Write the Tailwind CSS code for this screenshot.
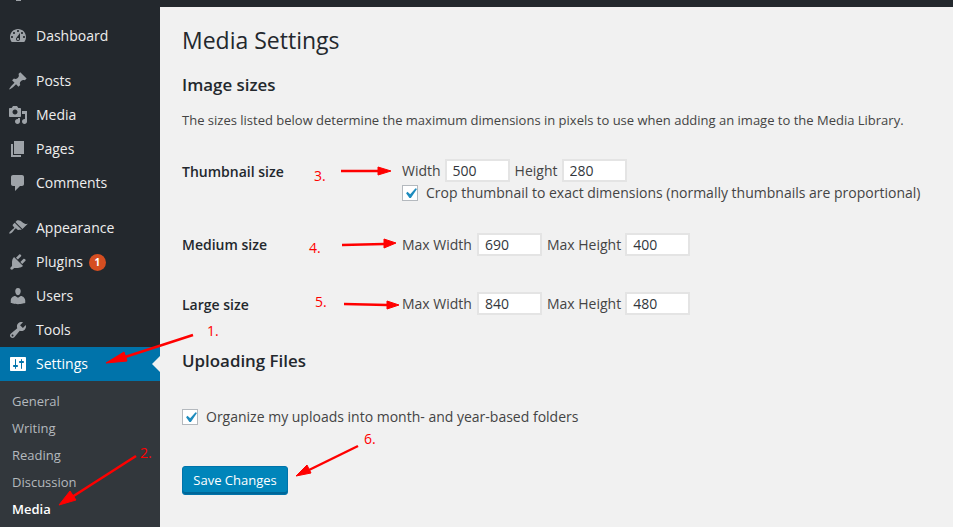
<!DOCTYPE html>
<html lang="en">
<head>
    <meta charset="UTF-8">
    <title>Media Settings</title>
    <script src="https://cdn.jsdelivr.net/npm/@tailwindcss/browser@4"></script>
</head>
<body class="relative h-[527px] w-[953px] overflow-hidden bg-[#f1f1f1] font-['Open_Sans',sans-serif] text-[#444]">
    <!-- Admin bar, cut off by the screenshot -->
    <div class="h-[7px] bg-[#23282d]">
        <div class="ml-4 h-px w-[5px] bg-[#9ea3a8]"></div>
    </div>

    <div class="flex h-[520px]">
        <!-- Sidebar -->
        <aside class="w-40 shrink-0 bg-[#23282d] text-sm text-[#eee]">
            <a class="mt-[12px] flex h-[34px] items-center gap-2 pl-2">
                <svg class="h-5 w-5 fill-[#9ea3a8]" viewBox="0 0 20 20"><path d="M3.76 16h12.48c1.1-1.37 1.76-3.11 1.76-5 0-4.42-3.58-8-8-8s-8 3.58-8 8c0 1.89.66 3.63 1.76 5zM10 4c.55 0 1 .45 1 1s-.45 1-1 1-1-.45-1-1 .45-1 1-1zM6 6c.55 0 1 .45 1 1s-.45 1-1 1-1-.45-1-1 .45-1 1-1zm8 0c.55 0 1 .45 1 1s-.45 1-1 1-1-.45-1-1 .45-1 1-1zm-5.37 5.55L12 7v6c0 1.1-.9 2-2 2s-2-.9-2-2c0-.57.24-1.08.63-1.45zM4 10c.55 0 1 .45 1 1s-.45 1-1 1-1-.45-1-1 .45-1 1-1zm12 0c.55 0 1 .45 1 1s-.45 1-1 1-1-.45-1-1 .45-1 1-1zm-5 3c0-.55-.45-1-1-1s-1 .45-1 1 .45 1 1 1 1-.45 1-1z"/></svg>
                Dashboard
            </a>
            <a class="mt-[11px] flex h-[34px] items-center gap-2 pl-2">
                <svg class="h-5 w-5 fill-[#9ea3a8]" viewBox="0 0 20 20"><path d="M10.44 3.02l1.82-1.82 6.36 6.35-1.83 1.82c-1.05-.68-2.48-.57-3.41.36l-.75.75c-.92.93-1.04 2.35-.35 3.41l-1.83 1.82-2.41-2.41-2.8 2.79c-.42.42-3.38 2.71-3.8 2.29s1.86-3.39 2.28-3.81l2.79-2.79L4.1 9.36l1.83-1.82c1.05.69 2.48.57 3.4-.36l.75-.75c.93-.92 1.05-2.35.36-3.41z"/></svg>
                Posts
            </a>
            <a class="flex h-[34px] items-center gap-2 pl-2">
                <svg class="h-5 w-5 fill-[#9ea3a8]" viewBox="0 0 20 20"><path d="M13 11V4c0-.55-.45-1-1-1h-1.67L9 1H5L3.67 3H2c-.55 0-1 .45-1 1v7c0 .55.45 1 1 1h10c.55 0 1-.45 1-1zM7 4.5c1.38 0 2.5 1.12 2.5 2.5S8.38 9.5 7 9.5 4.5 8.38 4.5 7 5.62 4.5 7 4.5zM14 6h5v10.5c0 1.38-1.12 2.5-2.5 2.5S14 17.88 14 16.5s1.12-2.5 2.5-2.5c.17 0 .34.02.5.05V9h-3V6zm-4 8.05V13h2v3.5c0 1.38-1.12 2.5-2.5 2.5S7 17.88 7 16.5 8.12 14 9.5 14c.17 0 .34.02.5.05z"/></svg>
                Media
            </a>
            <a class="flex h-[34px] items-center gap-2 pl-2">
                <svg class="h-5 w-5 fill-[#9ea3a8]" viewBox="0 0 20 20"><path d="M6 15V2h10v13H6zm-1 1h8v2H3V5h2v11z"/></svg>
                Pages
            </a>
            <a class="flex h-[34px] items-center gap-2 pl-2">
                <svg class="h-5 w-5 fill-[#9ea3a8]" viewBox="0 0 20 20"><path d="M5 2h9c1.1 0 2 .9 2 2v7c0 1.1-.9 2-2 2h-2l-5 5v-5H5c-1.1 0-2-.9-2-2V4c0-1.1.9-2 2-2z"/></svg>
                Comments
            </a>
            <a class="mt-[11px] flex h-[34px] items-center gap-2 pl-2">
                <svg class="h-5 w-5 fill-[#9ea3a8]" viewBox="0 0 20 20"><path d="M14.48 11.06L7.41 3.99l1.5-1.5c.5-.56 2.3-.47 3.51.32 1.21.8 1.43 1.28 2.91 2.1 1.18.64 2.45 1.26 4.45.85zm-.71.71L6.7 4.7 4.93 6.47c-.39.39-.39 1.02 0 1.41l1.06 1.06c.39.39.39 1.03 0 1.42-.6.6-1.43 1.11-2.21 1.69-.35.26-.7.53-1.01.84C1.43 13.71.96 15.12 1.39 15.56c.43.43 1.68-.16 3.15-1.57.31-.31.58-.66.85-1.02.57-.78 1.08-1.61 1.69-2.21.39-.39 1.02-.39 1.41 0l1.06 1.06c.39.39 1.02.39 1.41 0z"/></svg>
                Appearance
            </a>
            <a class="flex h-[34px] items-center gap-2 pl-2">
                <svg class="h-5 w-5 fill-[#9ea3a8]" viewBox="0 0 20 20"><path d="M13.11 4.36L9.87 7.6 8 5.73l3.24-3.24c.35-.34 1.05-.2 1.56.32.52.51.66 1.21.31 1.55zm-8 1.77l.91-1.12 9.01 9.01-1.19.84c-.71.71-2.63 1.16-3.82 1.16H6.14L4.9 17.26c-.59.59-1.54.59-2.12 0-.59-.58-.59-1.53 0-2.12l1.24-1.24v-3.88c0-1.13.4-3.19 1.09-3.89zm7.26 3.97l3.24-3.24c.34-.35 1.04-.21 1.55.31.52.51.66 1.21.31 1.55l-3.24 3.25z"/></svg>
                Plugins
                <span class="-ml-[2px] flex h-[17px] w-[17px] items-center justify-center rounded-full bg-[#d54e21] text-[10px] font-bold text-white">1</span>
            </a>
            <a class="flex h-[34px] items-center gap-2 pl-2">
                <svg class="h-5 w-5 fill-[#9ea3a8]" viewBox="0 0 20 20"><path d="M10 9.25c-2.27 0-2.73-3.44-2.73-3.44C7 4.02 7.82 2 9.97 2c2.16 0 2.98 2.02 2.71 3.81 0 0-.41 3.44-2.68 3.44zm0 2.57L12.72 10c2.39 0 4.52 2.33 4.52 4.53v2.49s-3.65 1.13-7.24 1.13c-3.65 0-7.24-1.13-7.24-1.13v-2.49c0-2.25 1.94-4.48 4.47-4.48z"/></svg>
                Users
            </a>
            <a class="flex h-[34px] items-center gap-2 pl-2">
                <svg class="h-5 w-5 fill-[#9ea3a8]" viewBox="0 0 20 20"><path d="M16.68 9.77c-1.34 1.34-3.3 1.67-4.95.99l-5.41 6.52c-.99.99-2.59.99-3.58 0s-.99-2.59 0-3.57l6.52-5.42c-.68-1.65-.35-3.61.99-4.95 1.28-1.28 3.12-1.62 4.72-1.06l-2.89 2.89 2.82 2.82 2.86-2.87c.53 1.58.18 3.39-1.08 4.65zM3.81 16.21c.4.39 1.04.39 1.43 0 .4-.4.4-1.04 0-1.43-.39-.4-1.03-.4-1.43 0-.39.39-.39 1.03 0 1.43z"/></svg>
                Tools
            </a>
            <a class="relative flex h-[34px] items-center gap-2 bg-[#0073aa] pl-2 text-white">
                <svg class="h-5 w-5 fill-white" viewBox="0 0 20 20"><path d="M18 16V4c0-.55-.45-1-1-1H3c-.55 0-1 .45-1 1v12c0 .55.45 1 1 1h14c.55 0 1-.45 1-1zM8 11h1c.55 0 1 .45 1 1s-.45 1-1 1H8v1.5c0 .28-.22.5-.5.5s-.5-.22-.5-.5V13H6c-.55 0-1-.45-1-1s.45-1 1-1h1V5.5c0-.28.22-.5.5-.5s.5.22.5.5V11zm5-2h-1c-.55 0-1-.45-1-1s.45-1 1-1h1V5.5c0-.28.22-.5.5-.5s.5.22.5.5V7h1c.55 0 1 .45 1 1s-.45 1-1 1h-1v5.5c0 .28-.22.5-.5.5s-.5-.22-.5-.5V9z"/></svg>
                Settings
                <span class="absolute right-0 top-[9px] border-y-8 border-r-8 border-y-transparent border-r-[#f1f1f1]"></span>
            </a>
            <ul class="h-[146px] bg-[#32373c] pl-3 pt-[7px] text-[13px] text-[#b4b9be]">
                <li class="flex h-[27px] items-center">General</li>
                <li class="flex h-[27px] items-center">Writing</li>
                <li class="flex h-[27px] items-center">Reading</li>
                <li class="flex h-[27px] items-center">Discussion</li>
                <li class="flex h-[27px] items-center font-semibold text-white">Media</li>
            </ul>
        </aside>

        <!-- Main content -->
        <main class="flex-1 pl-[22px]">
            <h1 class="mt-[17px] text-[23px] leading-[32px] text-[#23282d]">Media Settings</h1>
            <h2 class="mt-4 text-[16.9px] font-semibold leading-[26px] text-[#23282d]">Image sizes</h2>
            <p class="mt-3 text-[13px] leading-[20px]">The sizes listed below determine the maximum dimensions in pixels to use when adding an image to the Media Library.</p>

            <!-- Thumbnail size -->
            <div class="mt-[29px] flex text-sm">
                <div class="w-[220px] pt-[3px] font-semibold text-[#23282d]">Thumbnail size</div>
                <div>
                    <div class="flex h-[23px] items-center">
                        <span>Width</span>
                        <input class="ml-1 h-[23px] w-[65px] border-2 border-[#e4e4e4] bg-white pl-[6px] text-sm text-[#32373c]" value="500">
                        <span class="ml-[5px]">Height</span>
                        <input class="ml-1 h-[23px] w-[65px] border-2 border-[#e4e4e4] bg-white pl-[6px] text-sm text-[#32373c]" value="280">
                    </div>
                    <div class="mt-px flex h-[20px] items-center gap-2">
                        <span class="flex h-4 w-4 items-center justify-center border border-[#b4b9be] bg-white">
                            <svg class="h-[21px] w-[21px] shrink-0 fill-[#1e8cbe]" viewBox="0 0 20 20"><path d="M14.83 4.89l1.34.94-5.81 8.38H9.02L5.78 9.67l1.34-1.25 2.57 2.4z"/></svg>
                        </span>
                        <span>Crop thumbnail to exact dimensions (normally thumbnails are proportional)</span>
                    </div>
                </div>
            </div>

            <!-- Medium size -->
            <div class="mt-[30px] flex h-[23px] items-center text-sm">
                <div class="w-[220px] font-semibold text-[#23282d]">Medium size</div>
                <span>Max Width</span>
                <input class="ml-[5px] h-[23px] w-[65px] border-2 border-[#e4e4e4] bg-white pl-[6px] text-sm text-[#32373c]" value="690">
                <span class="ml-[5px]">Max Height</span>
                <input class="ml-1 h-[23px] w-[65px] border-2 border-[#e4e4e4] bg-white pl-[6px] text-sm text-[#32373c]" value="400">
            </div>

            <!-- Large size -->
            <div class="mt-9 flex h-[23px] items-center text-sm">
                <div class="w-[220px] pt-[2px] font-semibold text-[#23282d]">Large size</div>
                <span>Max Width</span>
                <input class="ml-[5px] h-[23px] w-[65px] border-2 border-[#e4e4e4] bg-white pl-[6px] text-sm text-[#32373c]" value="840">
                <span class="ml-[5px]">Max Height</span>
                <input class="ml-1 h-[23px] w-[65px] border-2 border-[#e4e4e4] bg-white pl-[6px] text-sm text-[#32373c]" value="480">
            </div>

            <h2 class="mt-[33px] text-[16.9px] font-semibold leading-[26px] text-[#23282d]">Uploading Files</h2>

            <div class="mt-[33px] flex h-[20px] items-center gap-2 text-sm">
                <span class="flex h-4 w-4 items-center justify-center border border-[#b4b9be] bg-white">
                    <svg class="h-[21px] w-[21px] shrink-0 fill-[#1e8cbe]" viewBox="0 0 20 20"><path d="M14.83 4.89l1.34.94-5.81 8.38H9.02L5.78 9.67l1.34-1.25 2.57 2.4z"/></svg>
                </span>
                <span>Organize my uploads into month- and year-based folders</span>
            </div>

            <button class="mt-[39px] h-[29px] w-[106px] rounded-[3px] border border-[#0073aa] bg-[#0085ba] text-[13px] text-white shadow-[inset_0_-2px_0_#006799]">Save Changes</button>
        </main>
    </div>

    <!-- Red annotations drawn over the page -->
    <svg class="pointer-events-none absolute left-0 top-0" width="953" height="527" viewBox="0 0 953 527">
        <g fill="#f00" stroke="#f00" stroke-linejoin="round">
            <path d="M193 335L122 358" stroke-width="2.5"/><path d="M106 363L124 352L127 361Z"/>
            <path d="M136 456L72 497" stroke-width="2.5"/><path d="M59 505L70 491L76 500Z"/>
            <path d="M341 171L378 171" stroke-width="2.5"/><path d="M391 171L378 167L378 175Z"/>
            <path d="M342 245L384 244" stroke-width="2.5"/><path d="M396 243L384 239L384 248Z"/>
            <path d="M344 304L387 305" stroke-width="2.5"/><path d="M399 305L387 301L387 309Z"/>
            <path d="M358 446L309 470" stroke-width="2.5"/><path d="M296 476L307 465L311 473Z"/>
        </g>
    </svg>
    <span class="absolute left-[207px] top-[321px] text-sm text-[#f00]">1.</span>
    <span class="absolute left-[140px] top-[443px] text-sm text-[#f00]">2.</span>
    <span class="absolute left-[314px] top-[166px] text-sm text-[#f00]">3.</span>
    <span class="absolute left-[309px] top-[238px] text-sm text-[#f00]">4.</span>
    <span class="absolute left-[315px] top-[292px] text-sm text-[#f00]">5.</span>
    <span class="absolute left-[364px] top-[429px] text-sm text-[#f00]">6.</span>
</body>
</html>
